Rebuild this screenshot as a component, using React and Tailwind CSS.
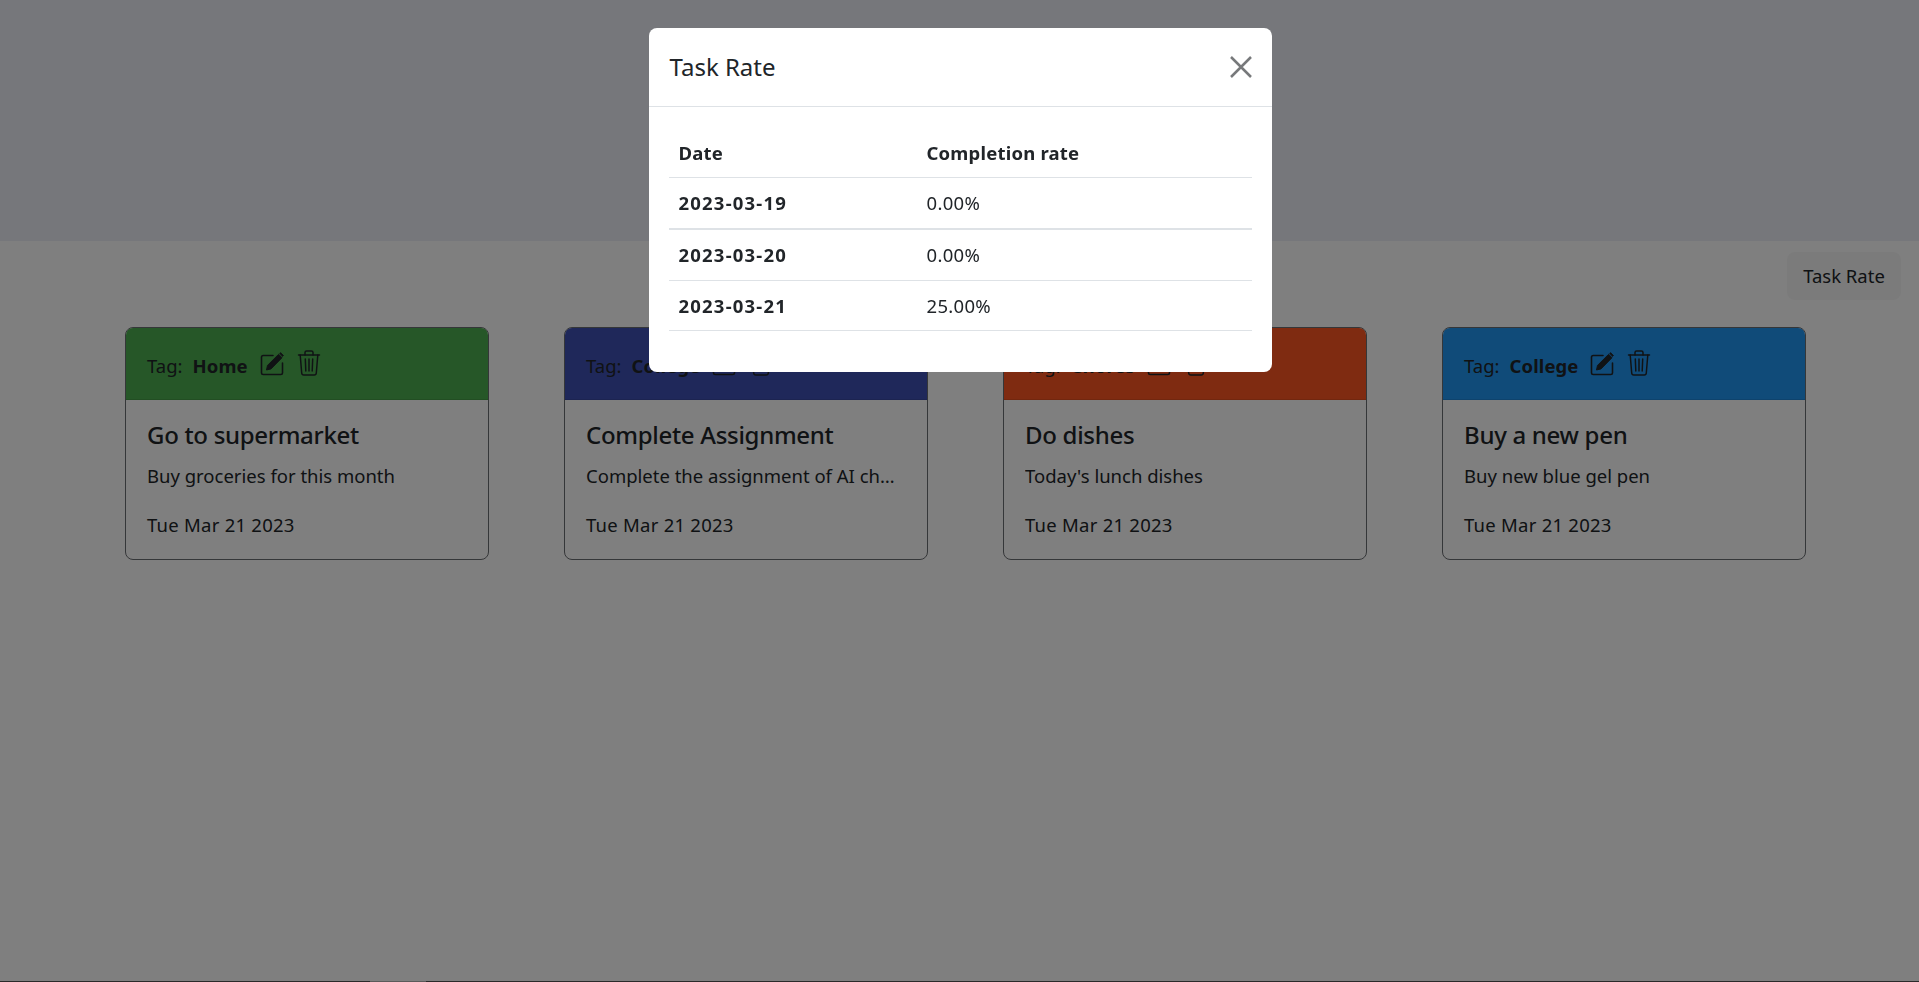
import React from 'react'

const tasks = [
  { tag: 'Home', title: 'Go to supermarket', desc: 'Buy groceries for this month', date: 'Tue Mar 21 2023', color: 'bg-[#4caf50]' },
  { tag: 'College', title: 'Complete Assignment', desc: 'Complete the assignment of AI chapter 4 and submit', date: 'Tue Mar 21 2023', color: 'bg-[#3f51b5]' },
  { tag: 'Chores', title: 'Do dishes', desc: "Today's lunch dishes", date: 'Tue Mar 21 2023', color: 'bg-[#ff5722]' },
  { tag: 'College', title: 'Buy a new pen', desc: 'Buy new blue gel pen', date: 'Tue Mar 21 2023', color: 'bg-[#2196f3]' }
]

const rates = [
  { date: '2023-03-19', rate: '0.00%', row: 'h-[52px] border-b-2 border-[#dee2e6]' },
  { date: '2023-03-20', rate: '0.00%', row: 'h-[51px] border-b border-[#dee2e6]' },
  { date: '2023-03-21', rate: '25.00%', row: 'h-[50px] border-b border-[#dee2e6]' }
]

const EditIcon = () => (
  <svg width="25" height="25" viewBox="0 0 25 25" fill="none" stroke="#212529" strokeWidth="1.6" className="shrink-0">
    <path d="M13 4.500H3.200C2.300 4.500 1.500 5.300 1.500 6.200V22c0 .9.8 1.500 1.700 1.500h17.600c.9 0 1.700-.6 1.700-1.500V12" strokeLinecap="round" />
    <path d="M6.500 19l1-4.600L18.600 3.300l3.400 3.400L11 17.900z" fill="#212529" stroke="#212529" strokeWidth="1" strokeLinejoin="round" />
    <path d="M20.600 1.600l2.900 2.900-.9.9-2.900-2.900z" fill="#212529" strokeWidth="0.8" />
  </svg>
)

const TrashIcon = () => (
  <svg width="24" height="26" viewBox="0 0 24 26" fill="none" stroke="#212529" strokeWidth="1.5" className="shrink-0" strokeLinecap="round" strokeLinejoin="round">
    <path d="M1.500 5h21" />
    <path d="M8 5V2.600C8 1.700 8.700 1 9.600 1h4.800c.9 0 1.600.7 1.600 1.600V5" />
    <path d="M3.200 5l1.500 18c.1 1 .9 2 2 2h10.600c1.100 0 1.900-1 2-2l1.500-18" />
    <path d="M8.300 9l.5 12M12 9v12M15.700 9l-.5 12" />
  </svg>
)

const TaskCard = ({ task }) => (
  <div className="w-[364px] h-[233px] shrink-0 rounded-[8px] border border-[#6b6e72] overflow-hidden flex flex-col bg-white">
    <div className={`h-[72px] shrink-0 pl-[21px] pt-[4px] flex items-center border-b border-black/10 ${task.color}`}>
      <span className="text-[18.500px] text-[#212529]">Tag:</span>
      <span className="ml-[10px] text-[18.500px] font-bold text-[#212529] tracking-[0.1px]">{task.tag}</span>
      <span className="ml-[12px] mb-[5px] flex items-center gap-[12px]">
        <EditIcon />
        <TrashIcon />
      </span>
    </div>
    <div className="flex-1 px-[21px] pt-[20px] min-w-0">
      <h5 className="text-[24px] leading-[30px] font-medium text-[#212529] tracking-[-0.3px] mb-[12px]">{task.title}</h5>
      <p className="text-[18.500px] leading-[27px] text-[#212529] truncate pr-[6px] mb-[22px]">{task.desc}</p>
      <p className="text-[18.500px] leading-[27px] text-[#212529] tracking-[0.25px]">{task.date}</p>
    </div>
  </div>
)

const App = () => {
  return (
    <div className="min-h-screen flex flex-col bg-white font-['Noto_Sans',sans-serif]">
      <div className="h-[241px] bg-[#edeff7]"></div>

      <div className="flex justify-end pr-[18px] pt-[11px]">
        <button className="h-[48px] w-[114px] rounded-[8px] bg-[#f6f7f7] text-[18.500px] text-[#212529]">Task Rate</button>
      </div>

      <div className="flex gap-[75px] pl-[125px] mt-[27px]">
        {tasks.map((task, i) => (
          <TaskCard key={i} task={task} />
        ))}
      </div>

      <div className="mt-auto h-px bg-[#555] pl-[370px]">
        <div className="h-px w-[56px] bg-[#b4b4b4]"></div>
      </div>

      {/* Modal */}
      <div className="fixed inset-0 bg-black/50 flex justify-center items-start pt-[28px]">
        <div className="w-[623px] h-[344px] ml-px bg-white rounded-[8px] flex flex-col">
          <div className="h-[79px] shrink-0 border-b border-[#dee2e6] px-[20px] flex items-center justify-between">
            <h5 className="ml-px text-[24px] text-[#212529]">Task Rate</h5>
            <svg width="22" height="22" viewBox="0 0 22 22" stroke="#77797b" strokeWidth="2.500">
              <path d="M1 1l20 20M21 1L1 21" />
            </svg>
          </div>
          <div className="px-[20px] pt-[20px]">
            <table className="w-full border-collapse text-[18.500px] leading-[27px] text-[#212529]">
              <thead>
                <tr className="h-[50px] border-b border-[#dee2e6]">
                  <th className="w-[248px] px-[10px] pt-[2px] text-left font-bold tracking-[0.2px]">Date</th>
                  <th className="px-[10px] pt-[2px] text-left font-bold tracking-[0.2px]">Completion rate</th>
                </tr>
              </thead>
              <tbody>
                {rates.map((row) => (
                  <tr key={row.date} className={row.row}>
                    <td className="px-[10px] font-bold tracking-[1.2px]">{row.date}</td>
                    <td className="px-[10px] tracking-[0.3px]">{row.rate}</td>
                  </tr>
                ))}
              </tbody>
            </table>
          </div>
        </div>
      </div>
    </div>
  )
}

export default App
